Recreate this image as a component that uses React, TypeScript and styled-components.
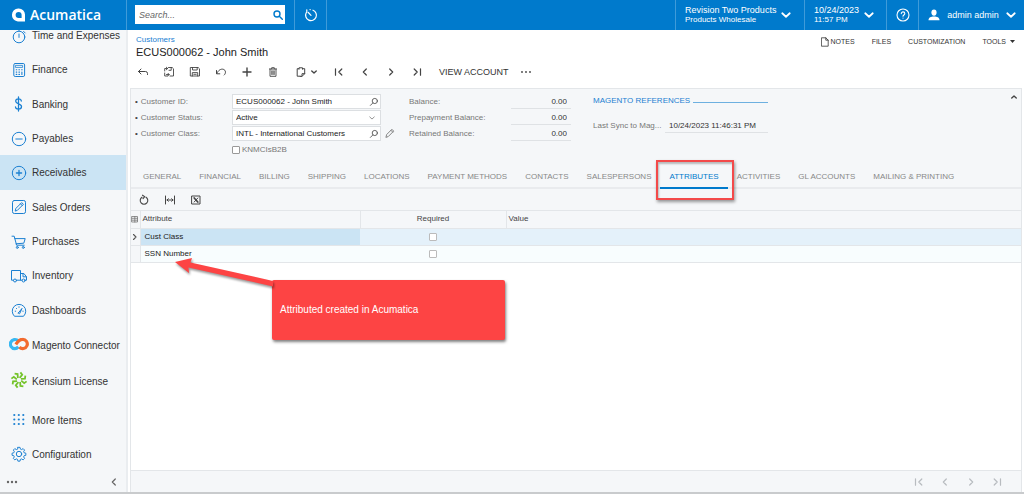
import React from "react";
import styled, { createGlobalStyle, css } from "styled-components";

const blue = "#007acc";
const panel = "#f5f7f9";
const line = "#e3e6e9";

const GlobalStyle = createGlobalStyle`
  *, *::before, *::after { box-sizing: border-box; }
  body {
    margin: 0;
    font-family: "Liberation Sans", Arial, sans-serif;
    font-size: 8px;
    line-height: 12px;
    color: #333;
    background: #fff;
  }
  button, input, select { font: inherit; color: inherit; }
  button { border: 0; padding: 0; background: none; cursor: pointer; }
  a { color: inherit; text-decoration: none; }
  svg { display: block; flex: none; }
`;

/* ---------- icons ---------- */

type IconProps = {
  size?: number;
  w?: number;
  sw?: number;
  box?: number;
  boxW?: number;
  children: React.ReactNode;
};

function Icon({ size = 12, w, sw = 1, box = size, boxW, children }: IconProps) {
  return (
    <svg
      width={w ?? size}
      height={size}
      viewBox={`0 0 ${boxW ?? box} ${box}`}
      fill="none"
      stroke="currentColor"
      strokeWidth={sw}
      strokeLinecap="round"
      strokeLinejoin="round"
      aria-hidden="true"
    >
      {children}
    </svg>
  );
}

const ChevronDown = ({ size = 8, sw = 1.4 }: { size?: number; sw?: number }) => (
  <Icon size={size} box={8} sw={sw}><path d="M1 2.6 4 5.4 7 2.6" /></Icon>
);

const Timer = () => (
  <Icon size={16}><circle cx="8" cy="9" r="5.8" /><path d="M8 6v3.4M6.4 1.2h3.2M8 1.2v2M12.6 3.4l1.6 1.6" /></Icon>
);
const Calculator = () => (
  <Icon size={16} sw={1}>
    <rect x="2.8" y="1.5" width="10.8" height="13" rx="1.4" />
    <rect x="4.8" y="3.4" width="6.8" height="2" strokeWidth="0.8" />
    <path d="M5.2 7.8h.6M7.9 7.8h.6M10.6 7.8h.6M5.2 10.1h.6M7.9 10.1h.6M5.2 12.4h.6M7.9 12.4h.6M10.9 10.1v2.3" strokeWidth="1.1" />
  </Icon>
);
const Dollar = () => (
  <Icon size={16} sw={1.3}><path d="M7.500 1v14M10.300 5C10.300 3.600 9.200 2.900 7.500 2.900S4.700 3.700 4.700 5.200C4.700 8.300 10.500 7.300 10.500 10.500 10.500 12.200 9.200 13.100 7.500 13.100S4.500 12.300 4.500 10.800" /></Icon>
);
const CircleMinus = () => (
  <Icon size={16}><circle cx="8" cy="8" r="6.700" /><path d="M4.800 8h6.400" /></Icon>
);
const CirclePlus = () => (
  <Icon size={16}><circle cx="8" cy="8" r="6.700" /><path d="M5.400 8h5.200M8 5.400v5.200" strokeWidth="1.300" /></Icon>
);
const SquarePencil = () => (
  <Icon size={16}>
    <rect x="1.500" y="1.500" width="13" height="13" rx="1.800" />
    <path d="m4.300 11.700.6-2.300 5.800-5.800 1.700 1.700-5.800 5.800zM9.500 4.800l1.700 1.700" />
  </Icon>
);
const Cart = () => (
  <Icon size={16}>
    <path d="M1 2.200h2.200l2.400 9h7.600M3.900 4.600h10.300l-1.400 4.600-7.700.6" />
    <circle cx="6.300" cy="13.400" r="1" /><circle cx="12.300" cy="13.400" r="1" />
  </Icon>
);
const Truck = () => (
  <Icon size={16} w={18} boxW={18}>
    <path d="M3.400 12.200H1.500V2.500h9v9.700H6.600M10.500 5.500h3.400l2.600 3.300v3.400h-1.300M10.500 12.200h1.500M13 5.700v3.100h3.300" />
    <circle cx="5" cy="12.500" r="1.500" /><circle cx="13.600" cy="12.500" r="1.500" />
  </Icon>
);
const Gauge = () => (
  <Icon size={16}>
    <path d="M3.200 14a6.800 6.800 0 1 1 9.600 0z" />
    <path d="m7.400 10.900 3.600-4.500-2.300 5.200a.8.800 0 0 1-1.300-.7zM4.200 9.200h.5M5.300 6.300l.3.300M8 4.800v.5M11.800 9.200h.4" />
  </Icon>
);
const Rings = () => (
  <svg width="20" height="14" viewBox="0 0 20 14" fill="none" strokeWidth="3.200" aria-hidden="true">
    <path d="M9.300 9.800C8.300 11.100 7.200 11.700 5.900 11.700a4.600 4.600 0 1 1 3.400-7.800" stroke="#38b8f2" />
    <path d="M6.800 7.400C8.300 5.200 10 2.400 13.600 2.400a4.600 4.600 0 1 1-3.200 7.800" stroke="#f26a2e" />
  </svg>
);
const Burst = () => (
  <svg width="18" height="18" viewBox="-9 -9 18 18" fill="none" stroke="#74c32a" strokeWidth="1.800" aria-hidden="true">
    {[0, 45, 90, 135, 180, 225, 270, 315].map((a) => (
      <path key={a} d="M.6-2.200 3.200-5.200 1.400-7.600" transform={`rotate(${a})`} />
    ))}
  </svg>
);
const DotGrid = () => (
  <svg width="16" height="16" viewBox="0 0 16 16" fill="currentColor" aria-hidden="true">
    {[3, 7.500, 12].map((y) => [3.300, 7.800, 12.300].map((x) => <circle key={`${x}-${y}`} cx={x} cy={y} r="1.100" />))}
  </svg>
);
const Gear = () => (
  <Icon size={16}>
    <circle cx="8" cy="8" r="2.700" />
    <path d="M6.900 1.400h2.200l.4 1.800 1.200.5 1.600-1 1.500 1.500-1 1.600.5 1.200 1.800.4v2.200l-1.800.4-.5 1.200 1 1.600-1.500 1.500-1.600-1-1.200.5-.4 1.800H6.900l-.4-1.800-1.200-.5-1.600 1-1.500-1.500 1-1.600-.5-1.200L.9 9.600V7.400L2.700 7l.5-1.200-1-1.600 1.500-1.500 1.600 1 1.200-.5z" transform="translate(.2 0) scale(.97)" />
  </Icon>
);

const Lens = () => (
  <Icon size={10} sw={0.9}><circle cx="5.800" cy="4" r="2.600" /><path d="M3.800 6 1.400 8.400" /></Icon>
);
const First = () => <Icon size={10} sw={1.200}><path d="M1.500 1.800v6.400M7.800 2 4.800 5l3 3" /></Icon>;
const Prev = () => <Icon size={10} sw={1.200}><path d="M6.300 2 3.300 5l3 3" /></Icon>;
const Next = () => <Icon size={10} sw={1.200}><path d="m3.700 2 3 3-3 3" /></Icon>;
const Last = () => <Icon size={10} sw={1.200}><path d="M8.500 1.800v6.400M2.200 2l3 3-3 3" /></Icon>;
const Floppy = ({ back = false }: { back?: boolean }) => (
  <Icon size={12} sw={0.9}>
    {back ? (
      <path d="M5.500 1.500h3.700l1.300 1.300v7.200H7M8.200 1.500v2.800H6M1.700 5V2.500h2.800M3.300 1.200 4.700 2.500 3.300 3.800M1.700 7v3h3M3.500 8.500h2.700L5 7.300M6.200 8.500 5 9.800" />
    ) : (
      <path d="M1.700 1.500h7.500l1.300 1.300v7.200H1.700zM3.500 1.500v2.500h4.700V1.500M3.300 10V6.600h5.400V10M4.800 8.300h2.400" />
    )}
  </Icon>
);
const Dots = ({ r = 0.9 }: { r?: number }) => (
  <svg width="12" height="4" viewBox="0 0 12 4" fill="currentColor" aria-hidden="true">
    <circle cx="2" cy="2" r={r} /><circle cx="6" cy="2" r={r} /><circle cx="10" cy="2" r={r} />
  </svg>
);

/* ---------- shell ---------- */

const Page = styled.div`
  min-height: 100vh;
  display: flex;
  flex-direction: column;
  border-bottom: 2px solid #c9cbcd;
`;

const TopBar = styled.header`
  display: flex;
  align-items: stretch;
  height: 30px;
  flex: none;
  color: #fff;
  background: ${blue};
`;

const Brand = styled.a`
  display: flex;
  align-items: center;
  gap: 5px;
  width: 127px;
  padding-left: 12px;
  border-right: 1px solid #3f9bd9;
  font: 600 14px/20px "Open Sans", "Noto Sans", sans-serif;
`;

const SearchBox = styled.div`
  display: flex;
  align-items: center;
  width: 150px;
  height: 19px;
  margin: 5px 9px 0 8px;
  padding: 0 2px 0 4px;
  background: #fff;
  color: ${blue};
`;

const SearchInput = styled.input`
  flex: 1;
  min-width: 0;
  border: 0;
  padding: 0;
  outline: 0;
  font-size: 9px;
  color: #333;
  &::placeholder { color: #666; font-style: italic; opacity: 1; }
`;

const TopButton = styled.button<{ $w: number; $push?: boolean; $side?: "right"; $end?: number }>`
  display: flex;
  align-items: center;
  justify-content: ${(p) => (p.$w < 40 ? "center" : "space-between")};
  width: ${(p) => p.$w}px;
  padding: 0 ${(p) => (p.$w < 40 ? 0 : p.$end ?? 12)}px 0 ${(p) => (p.$w < 40 ? 0 : 9)}px;
  margin-left: ${(p) => (p.$push ? "auto" : 0)};
  border-left: 1px solid #3f9bd9;
  ${(p) => p.$side && css`border-right: 1px solid #3f9bd9;`}
  color: #fff;
  font-size: 9px;
  text-align: left;
  white-space: nowrap;
`;

const TwoLines = styled.span`
  display: flex;
  flex-direction: column;
  line-height: 10px;
  small { font-size: 8px; }
`;

const Body = styled.div`
  flex: 1;
  display: flex;
  min-height: 0;
`;

const Sidebar = styled.nav`
  width: 128px;
  flex: none;
  display: flex;
  flex-direction: column;
  overflow: hidden;
  background: ${panel};
  border-right: 2px solid #eaedf0;
`;

const Modules = styled.ul`
  flex: 1;
  display: flex;
  flex-direction: column;
  list-style: none;
  margin: -12px 0 0;
  padding: 0;
`;

const Module = styled.li<{ $active?: boolean; $tall?: boolean; $apart?: boolean }>`
  flex: 1 0 ${(p) => (p.$tall ? 36 : 34)}px;
  display: flex;
  margin-top: ${(p) => (p.$apart ? 3 : 0)}px;
  background: ${(p) => (p.$active ? "#cbe4f4" : "transparent")};
`;

const ModuleLink = styled.a`
  flex: 1;
  display: flex;
  align-items: center;
  gap: 3px;
  padding: 2px 0 0 9px;
  font-size: 10px;
  white-space: nowrap;
`;

const ModuleIcon = styled.span<{ $raised?: boolean }>`
  display: flex;
  justify-content: center;
  width: 20px;
  padding-bottom: ${(p) => (p.$raised ? 4 : 1)}px;
  color: #1b80d2;
`;

const SideFooter = styled.div`
  display: flex;
  align-items: center;
  justify-content: space-between;
  height: 21px;
  padding: 0 7px 0 6px;
  color: #666;
`;

const Main = styled.main`
  flex: 1;
  min-width: 0;
  display: flex;
  flex-direction: column;
  padding: 0 2px;
`;

const TitleRow = styled.div`
  display: flex;
  justify-content: space-between;
  height: 28px;
  padding: 4px 6px 0;
`;

const Crumb = styled.a`
  display: block;
  line-height: 11px;
  color: #1b80d2;
`;

const Title = styled.h1`
  margin: 0;
  font-size: 11px;
  line-height: 14px;
  font-weight: 400;
  color: #222;
`;

const PageLinks = styled.div`
  display: flex;
  align-items: center;
  gap: 17px;
  height: 16px;
  font-size: 7px;
  button { display: flex; align-items: center; gap: 2px; }
`;

const Toolbar = styled.div`
  display: flex;
  align-items: center;
  height: 28px;
  margin-bottom: 2px;
`;

const Tool = styled.button<{ $w?: number }>`
  display: flex;
  align-items: center;
  justify-content: center;
  gap: 4px;
  width: ${(p) => p.$w ?? 26}px;
  height: 20px;
  color: #444;
`;

const ViewAccount = styled.button`
  padding: 0 4px 0 9px;
  font-size: 9px;
`;

/* ---------- form ---------- */

const FormPanel = styled.section`
  display: grid;
  grid-template-columns: 246px 28px 162px 22px 175px 1fr;
  height: 78px;
  padding: 5px 4px 0;
  background: ${panel};
  border: 1px solid ${line};
  border-bottom: 0;
`;

const Column = styled.div<{ $at: number }>`
  grid-column: ${(p) => p.$at};
  display: flex;
  flex-direction: column;
  gap: 1px;
`;

const Field = styled.div<{ $label: number }>`
  display: grid;
  grid-template-columns: ${(p) => p.$label}px 1fr;
  align-items: center;
  height: 15px;
  label {
    color: #777;
    white-space: nowrap;
    overflow: hidden;
    text-overflow: ellipsis;
  }
`;

const Required = styled.span`
  color: #444;
  margin-right: 3px;
`;

const Control = styled.div`
  display: flex;
  align-items: center;
  height: 15px;
  border: 1px solid #dcdfe2;
  background: #fff;
  color: #555;
`;

const TextBox = styled.input`
  flex: 1;
  min-width: 0;
  height: 13px;
  border: 0;
  padding: 0 3px;
  background: transparent;
  color: #222;
`;

const Select = styled.select`
  flex: 1;
  height: 13px;
  border: 0;
  padding: 0 3px;
  appearance: none;
  background: transparent;
  color: #222;
`;

const Adornment = styled.span`
  padding-right: 5px;
  color: #888;
`;

const IconButton = styled.button`
  display: flex;
  padding-right: 1px;
`;

const EditButton = styled.button`
  grid-column: 2;
  display: flex;
  align-self: start;
  margin: 34px 0 0 4px;
  color: #777;
`;

const ReadOnly = styled.input<{ $left?: boolean }>`
  width: 100%;
  min-width: 0;
  height: 15px;
  border: 0;
  border-bottom: 1px solid #dfe2e5;
  padding: 0 4px;
  background: transparent;
  color: #333;
  text-align: ${(p) => (p.$left ? "left" : "right")};
`;

const CheckLine = styled.label`
  display: flex;
  align-items: center;
  gap: 2px;
  height: 15px;
  margin-left: 97px;
  color: #777;
`;

const Check = styled.input`
  appearance: none;
  display: inline-block;
  width: 8px;
  height: 8px;
  margin: 0;
  border: 1px solid #999;
  border-radius: 1px;
  background: #fff;
`;

const GroupTitle = styled.h2`
  display: flex;
  align-items: center;
  gap: 3px;
  height: 13px;
  margin: 0 0 10px;
  font-size: 8px;
  font-weight: 400;
  color: #1b80d2;
  white-space: nowrap;
  &::after { content: ""; flex: 1; height: 1px; background: #6db0e0; margin-top: 3px; }
`;

const Collapse = styled.button`
  grid-column: 6;
  justify-self: end;
  align-self: start;
  color: #444;
`;

/* ---------- tabs and grid ---------- */

const Sheet = styled.section`
  flex: 1;
  display: flex;
  flex-direction: column;
  border: 1px solid ${line};
  border-width: 0 1px;
`;

const Tabs = styled.div`
  display: flex;
  height: 23px;
  padding-left: 3px;
  background: ${panel};
  box-shadow: inset 0 -2px #e9ebee;
`;

const Tab = styled.button<{ $active?: boolean }>`
  position: relative;
  padding: 0 9px;
  white-space: nowrap;
  color: ${(p) => (p.$active ? blue : "#888")};
  border-bottom: 2px solid ${(p) => (p.$active ? blue : "transparent")};
`;

const Highlight = styled.span`
  position: absolute;
  inset: -6px -6px -13px -4px;
  border: 2px solid #f34a4a;
  box-shadow: 1px 2px 3px rgba(0, 0, 0, 0.4), inset 1px 2px 2px rgba(0, 0, 0, 0.25);
  pointer-events: none;
`;

const GridTools = styled.div`
  display: flex;
  align-items: center;
  height: 22px;
  background: ${panel};
  border-bottom: 1px solid #e3e6e9;
`;

const GridArea = styled.div`
  position: relative;
  flex: 1;
`;

const Table = styled.table`
  width: 100%;
  table-layout: fixed;
  border-collapse: collapse;
  th, td { padding: 0 2px; text-align: left; border-bottom: 1px solid ${line}; }
  th { height: 17px; font-weight: 400; color: #444; background: ${panel}; border-right: 1px solid ${line}; }
  th:last-child { border-right: 0; }
  td { height: 17px; color: #222; padding-left: 4px; }
  td:first-child { padding: 0; background: ${panel}; border-right: 1px solid ${line}; color: #555; }
  th:first-child { padding: 0; color: #777; }
  th.mid, td.mid { text-align: center; padding: 0; }
  td svg, th svg { margin: 0 auto; }
  td.mid input { display: block; margin: 0 auto; border-color: #bbb; }
`;

const Row = styled.tr<{ $active?: boolean }>`
  background: ${(p) => (p.$active ? "#e4f1fa" : "#f8fdfe")};
  ${(p) => p.$active && css`td:nth-child(2) { background: #cbe4f4; }`}
`;

const Callout = styled.div`
  position: absolute;
  left: 141px;
  top: 69px;
  display: flex;
  align-items: center;
  width: 233px;
  height: 60px;
  padding-left: 8px;
  border-radius: 2px;
  background: #fd4444;
  color: #fff;
  font-size: 10px;
  box-shadow: 1px 2px 3px rgba(0, 0, 0, 0.5);
`;

const Arrow = styled.svg`
  position: absolute;
  left: 39px;
  top: 45px;
  filter: drop-shadow(1px 2px 1px rgba(0, 0, 0, 0.4));
`;

const Pager = styled.div`
  display: flex;
  align-items: center;
  justify-content: flex-end;
  height: 22px;
  padding-right: 11px;
  background: ${panel};
  border-top: 1px solid ${line};
  button { color: #b8bcc0; }
`;

/* ---------- data ---------- */

const modules: { name: string; icon: React.ReactNode; tall?: boolean; apart?: boolean }[] = [
  { name: "Time and Expenses", icon: <Timer /> },
  { name: "Finance", icon: <Calculator /> },
  { name: "Banking", icon: <Dollar /> },
  { name: "Payables", icon: <CircleMinus /> },
  { name: "Receivables", icon: <CirclePlus /> },
  { name: "Sales Orders", icon: <SquarePencil /> },
  { name: "Purchases", icon: <Cart /> },
  { name: "Inventory", icon: <Truck /> },
  { name: "Dashboards", icon: <Gauge /> },
  { name: "Magento Connector", icon: <Rings />, tall: true },
  { name: "Kensium License", icon: <Burst />, tall: true },
  { name: "More Items", icon: <DotGrid />, apart: true },
  { name: "Configuration", icon: <Gear /> },
];

const tabs = [
  "GENERAL", "FINANCIAL", "BILLING", "SHIPPING", "LOCATIONS", "PAYMENT METHODS", "CONTACTS",
  "SALESPERSONS", "ATTRIBUTES", "ACTIVITIES", "GL ACCOUNTS", "MAILING & PRINTING",
];

const balances = ["Balance:", "Prepayment Balance:", "Retained Balance:"];
const attributes = ["Cust Class", "SSN Number"];

export default function App() {
  return (
    <Page>
      <GlobalStyle />
      <TopBar>
        <Brand href="#">
          <svg width="13" height="14" viewBox="0 0 13 14" aria-hidden="true">
            <path fill="#fff" fillRule="evenodd" d="M6.500.5A6.300 6.300 0 0 1 13 7v6.500H7.500C3 13.500 0 11 0 7A6.300 6.300 0 0 1 6.500.5zM6.600 3.900A3 3 0 0 0 3.600 7c0 2 1.200 3 3 3h3V7a3 3 0 0 0-3-3.100z" />
          </svg>
          Acumatica
        </Brand>
        <SearchBox>
          <SearchInput type="search" placeholder="Search..." aria-label="Search" />
          <Icon size={10} sw={1.400}><circle cx="4" cy="4" r="3" /><path d="m6.300 6.300 3 3" /></Icon>
        </SearchBox>
        <TopButton $w={33} $side="right" aria-label="Recently visited">
          <Icon size={14} sw={1.200}><path d="M9 2.200A5.400 5.400 0 1 1 2.200 4.800M4.300 4.500 7 7.300M2.800 1.800v2.500M6 1.600h.2" /></Icon>
        </TopButton>
        <TopButton $w={129} $push $end={13}>
          <TwoLines>Revision Two Products<small>Products Wholesale</small></TwoLines>
          <ChevronDown size={10} />
        </TopButton>
        <TopButton $w={82}>
          <TwoLines>10/24/2023<small>11:57 PM</small></TwoLines>
          <ChevronDown size={10} />
        </TopButton>
        <TopButton $w={32} aria-label="Help">
          <Icon size={14} sw={1.100}><circle cx="7" cy="7" r="6" /><path d="M5.300 5.600c0-2.300 3.500-2.200 3.500 0C8.800 7 7 6.900 7 8.200M7 10v.1" /></Icon>
        </TopButton>
        <TopButton $w={106} $end={8}>
          <svg width="12" height="12" viewBox="0 0 12 12" fill="#fff" aria-hidden="true">
            <ellipse cx="6" cy="3.600" rx="2.600" ry="3.100" /><path d="M.5 11.300c0-2.800 2.500-3.800 5.500-3.800s5.500 1 5.500 3.800z" />
          </svg>
          admin admin
          <ChevronDown size={10} />
        </TopButton>
      </TopBar>

      <Body>
        <Sidebar>
          <Modules>
            {modules.map((m) => (
              <Module key={m.name} $active={m.name === "Receivables"} $tall={m.tall} $apart={m.apart}>
                <ModuleLink href="#"><ModuleIcon $raised={m.tall}>{m.icon}</ModuleIcon>{m.name}</ModuleLink>
              </Module>
            ))}
          </Modules>
          <SideFooter>
            <button aria-label="Menu options"><Dots r={1.200} /></button>
            <button aria-label="Collapse menu"><Prev /></button>
          </SideFooter>
        </Sidebar>

        <Main>
          <TitleRow>
            <div>
              <Crumb href="#">Customers</Crumb>
              <Title>ECUS000062 - John Smith</Title>
            </div>
            <PageLinks>
              <button>
                <Icon size={10} w={8} boxW={8} sw={0.8}><path d="M.8.8h4L7.200 3.200v6H.8zM4.800.8v2.400h2.400" /></Icon>
                NOTES
              </button>
              <button>FILES</button>
              <button>CUSTOMIZATION</button>
              <button>
                TOOLS
                <svg width="8" height="4" viewBox="0 0 8 4" aria-hidden="true"><path fill="#333" d="M2 0h5L4.500 3z" /></svg>
              </button>
            </PageLinks>
          </TitleRow>

          <Toolbar>
            <Tool aria-label="Back"><Icon size={12}><path d="M4 3 1.500 5.500 4 8M1.500 5.500h7q2 0 2 2v1" /></Icon></Tool>
            <Tool aria-label="Save and close"><Floppy back /></Tool>
            <Tool aria-label="Save"><Floppy /></Tool>
            <Tool aria-label="Undo"><Icon size={12}><path d="M1.500 4.500v3.300h3.300M1.800 7.500C3.300 4 6 2.700 8.300 3.300c2.600.8 2.900 4 .9 5.700" /></Icon></Tool>
            <Tool aria-label="Add"><Icon size={12} sw={1.400}><path d="M2 6h8M6 2v8" /></Icon></Tool>
            <Tool aria-label="Delete"><Icon size={12} sw={0.9}><path d="M2.500 3h7M4.700 3V1.700h2.600V3M3 3v7.300h6V3M4.800 4.800v3.700M6 4.800v3.700M7.200 4.800v3.700" /></Icon></Tool>
            <Tool $w={40} aria-label="Clipboard">
              <Icon size={12}><path d="M3.800 2.700H2.200v7.500h3M4 3.200V1.800h3.500v1.400M7.700 2.700h2v5l-2.700 2.700H5.200M9.700 7.700H7v2.500" /></Icon>
              <ChevronDown size={6} sw={1.800} />
            </Tool>
            <Tool aria-label="First record"><First /></Tool>
            <Tool aria-label="Previous record"><Prev /></Tool>
            <Tool aria-label="Next record"><Next /></Tool>
            <Tool aria-label="Last record"><Last /></Tool>
            <ViewAccount>VIEW ACCOUNT</ViewAccount>
            <Tool aria-label="More actions"><Dots /></Tool>
          </Toolbar>

          <FormPanel>
            <Column $at={1}>
              <Field $label={97}>
                <label htmlFor="cid"><Required>•</Required>Customer ID:</label>
                <Control>
                  <TextBox id="cid" defaultValue="ECUS000062 - John Smith" />
                  <IconButton aria-label="Look up customer"><Lens /></IconButton>
                </Control>
              </Field>
              <Field $label={97}>
                <label htmlFor="status"><Required>•</Required>Customer Status:</label>
                <Control>
                  <Select id="status" defaultValue="Active"><option>Active</option></Select>
                  <Adornment><ChevronDown size={6} sw={1.200} /></Adornment>
                </Control>
              </Field>
              <Field $label={97}>
                <label htmlFor="cls"><Required>•</Required>Customer Class:</label>
                <Control>
                  <TextBox id="cls" defaultValue="INTL - International Customers" />
                  <IconButton aria-label="Look up class"><Lens /></IconButton>
                </Control>
              </Field>
              <CheckLine><Check type="checkbox" />KNMCIsB2B</CheckLine>
            </Column>
            <EditButton aria-label="Edit class">
              <Icon size={10} sw={0.9}><path d="m1 9 .7-2.500L6.900 1.300 8.700 3.100 3.500 8.300zM5.900 2.300l1.800 1.800" /></Icon>
            </EditButton>
            <Column $at={3}>
              {balances.map((b, i) => (
                <Field key={b} $label={102}>
                  <label htmlFor={`bal${i}`}>{b}</label>
                  <ReadOnly id={`bal${i}`} readOnly value="0.00" />
                </Field>
              ))}
            </Column>
            <Column $at={5}>
              <GroupTitle>MAGENTO REFERENCES</GroupTitle>
              <Field $label={72}>
                <label htmlFor="sync">Last Sync to Mag...</label>
                <ReadOnly id="sync" $left readOnly value="10/24/2023 11:46:31 PM" />
              </Field>
            </Column>
            <Collapse aria-label="Collapse form">
              <Icon size={6} box={8} w={6} sw={1.800}><path d="M1 5.400 4 2.600l3 2.800" /></Icon>
            </Collapse>
          </FormPanel>

          <Sheet>
            <Tabs role="tablist">
              {tabs.map((t) => {
                const active = t === "ATTRIBUTES";
                return (
                  <Tab key={t} role="tab" aria-selected={active} $active={active}>
                    {t}
                    {active && <Highlight />}
                  </Tab>
                );
              })}
            </Tabs>
            <GridTools>
              <Tool aria-label="Refresh"><Icon size={12} sw={1.100}><path d="M4 3.200a3.800 3.800 0 1 0 4 0M4.500 1.200 6.700 2.600 5 4.600" /></Icon></Tool>
              <Tool aria-label="Fit columns"><Icon size={12}><path d="M1.500 2v8M10.500 2v8M3 6h6M4.300 4.700 3 6l1.300 1.300M7.700 4.700 9 6 7.700 7.300" /></Icon></Tool>
              <Tool aria-label="Export to Excel"><Icon size={12}><rect x="2" y="2" width="8" height="8" /><path d="m4.200 4 3.600 4" strokeWidth="1.700" /><path d="M7.800 4 4.200 8" /></Icon></Tool>
            </GridTools>
            <GridArea>
              <Table>
                <colgroup>
                  <col width="9" /><col width="220" /><col width="146" /><col />
                </colgroup>
                <thead>
                  <tr>
                    <th aria-label="Row settings"><Icon size={8} sw={0.8}><path d="M1 1.500h5.500v5.500H1zM1 3.300h5.500M1 5.200h5.500M3.800 1.500v5.500" /></Icon></th>
                    <th>Attribute</th>
                    <th className="mid">Required</th>
                    <th>Value</th>
                  </tr>
                </thead>
                <tbody>
                  {attributes.map((a, i) => (
                    <Row key={a} $active={i === 0}>
                      <td>{i === 0 && <Icon size={8} sw={1.100}><path d="M2.500 1.500 5 4 2.500 6.500" /></Icon>}</td>
                      <td>{a}</td>
                      <td className="mid"><Check type="checkbox" aria-label={`${a} required`} /></td>
                      <td />
                    </Row>
                  ))}
                </tbody>
              </Table>
              <Callout>Attributed created in Acumatica</Callout>
              <Arrow width="104" height="34" viewBox="0 0 104 34" aria-hidden="true">
                <path fill="#fd4444" d="M5 6 22 2l-1.500 4.500L103 25v5.500L18.500 11.500 19 17z" />
              </Arrow>
            </GridArea>
            <Pager>
              <Tool aria-label="First page"><First /></Tool>
              <Tool aria-label="Previous page"><Prev /></Tool>
              <Tool aria-label="Next page"><Next /></Tool>
              <Tool aria-label="Last page"><Last /></Tool>
            </Pager>
          </Sheet>
        </Main>
      </Body>
    </Page>
  );
}
